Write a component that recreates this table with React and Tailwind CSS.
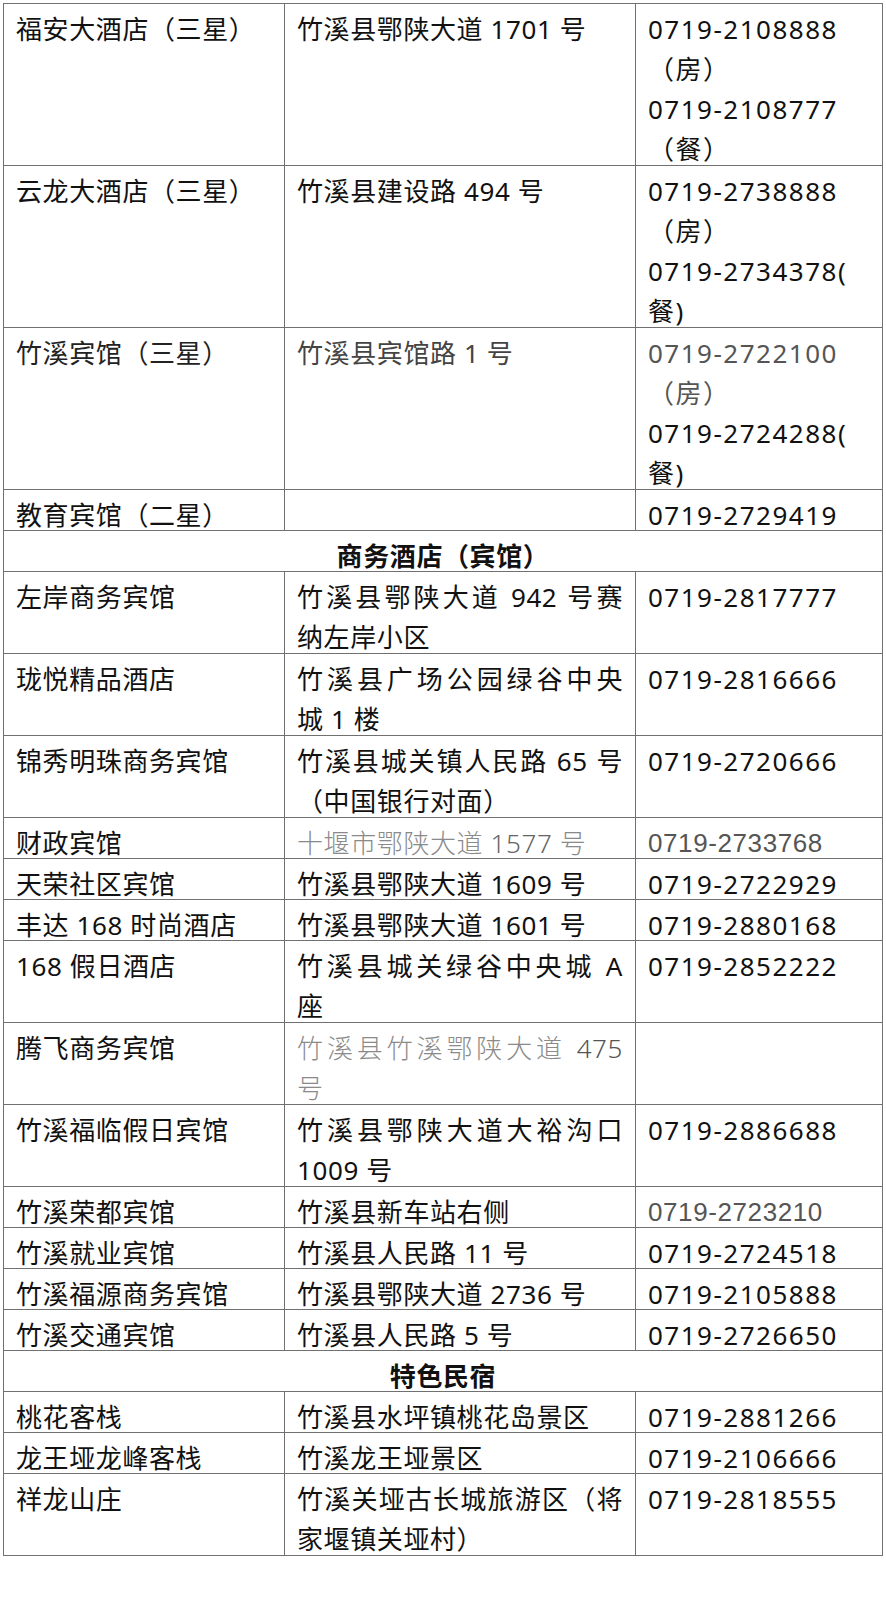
import React from 'react';

const GREY_SANS = "font-['Liberation_Sans','Noto_Sans_CJK_SC',sans-serif] text-[#555]";
const GREY_CJK = 'text-[#8a8a8a] font-light';

// each row: [col1 lines, col2 lines, col3 lines]; a line is a string or { t, j (justify), cls }
const rows = [
  [['福安大酒店（三星）'], ['竹溪县鄂陕大道 1701 号'], ['0719-2108888', '（房）', '0719-2108777', '（餐）']],
  [['云龙大酒店（三星）'], ['竹溪县建设路 494 号'], ['0719-2738888', '（房）', '0719-2734378(', '餐)']],
  [
    [{ t: '竹溪宾馆（三星）', cls: 'text-[#222]' }],
    [{ t: '竹溪县宾馆路 1 号', cls: 'text-[#444]' }],
    [
      { t: '0719-2722100', cls: 'text-[#555]' },
      { t: '（房）', cls: 'text-[#555]' },
      '0719-2724288(',
      '餐)'
    ]
  ],
  [['教育宾馆（二星）'], [], ['0719-2729419']],
  { header: '商务酒店（宾馆）' },
  [['左岸商务宾馆'], [{ t: '竹溪县鄂陕大道 942 号赛', j: true }, '纳左岸小区'], ['0719-2817777']],
  [['珑悦精品酒店'], [{ t: '竹溪县广场公园绿谷中央', j: true }, '城 1 楼'], ['0719-2816666']],
  [['锦秀明珠商务宾馆'], [{ t: '竹溪县城关镇人民路 65 号', j: true }, '（中国银行对面）'], ['0719-2720666']],
  [
    ['财政宾馆'],
    [{ t: <>十堰市鄂陕大道 <span className="text-[#666]">1577</span> 号</>, cls: GREY_CJK }],
    [{ t: '0719-2733768', cls: GREY_SANS }]
  ],
  [['天荣社区宾馆'], ['竹溪县鄂陕大道 1609 号'], ['0719-2722929']],
  [['丰达 168 时尚酒店'], ['竹溪县鄂陕大道 1601 号'], ['0719-2880168']],
  [['168 假日酒店'], [{ t: '竹溪县城关绿谷中央城 A', j: true }, '座'], ['0719-2852222']],
  [
    ['腾飞商务宾馆'],
    [
      { t: <>竹溪县竹溪鄂陕大道 <span className="text-[#555]">475</span></>, j: true, cls: GREY_CJK },
      { t: '号', cls: GREY_CJK }
    ],
    []
  ],
  [['竹溪福临假日宾馆'], [{ t: '竹溪县鄂陕大道大裕沟口', j: true }, '1009 号'], ['0719-2886688']],
  [['竹溪荣都宾馆'], ['竹溪县新车站右侧'], [{ t: '0719-2723210', cls: GREY_SANS }]],
  [['竹溪就业宾馆'], ['竹溪县人民路 11 号'], ['0719-2724518']],
  [['竹溪福源商务宾馆'], ['竹溪县鄂陕大道 2736 号'], ['0719-2105888']],
  [['竹溪交通宾馆'], ['竹溪县人民路 5 号'], ['0719-2726650']],
  { header: '特色民宿' },
  [['桃花客栈'], ['竹溪县水坪镇桃花岛景区'], ['0719-2881266']],
  [['龙王垭龙峰客栈'], ['竹溪龙王垭景区'], ['0719-2106666']],
  [['祥龙山庄'], [{ t: '竹溪关垭古长城旅游区（将', j: true }, '家堰镇关垭村）'], ['0719-2818555']]
];

function Line({ line, phone }) {
  if (typeof line === 'string') {
    return <div className={`whitespace-nowrap ${phone ? 'tracking-[1.5px]' : ''}`}>{line}</div>;
  }
  const justify = line.j ? 'text-justify [text-align-last:justify]' : 'whitespace-nowrap';
  const track = phone && !line.cls?.includes('Liberation') ? 'tracking-[1.5px]' : '';
  return <div className={`${justify} ${track} ${line.cls || ''}`}>{line.t}</div>;
}

function Cell({ lines, phone, multi }) {
  return (
    <td className="border border-[#707070] px-3 pt-[5px] pb-0 align-top">
      <div className={multi ? '-mb-[4px]' : '-mb-[5px]'}>
        {lines.map((l, i) => (
          <Line key={i} line={l} phone={phone} />
        ))}
      </div>
    </td>
  );
}

export default function App() {
  return (
    <div className="w-full bg-white px-[3px] pt-[3px]">
      <table
        lang="zh-CN"
        className="w-full table-fixed border-collapse text-[26px] leading-[40px] tracking-[0.6px] text-[#111] font-['Noto_Sans','Noto_Sans_CJK_SC',sans-serif]"
      >
        <colgroup>
          <col className="w-[281px]" />
          <col className="w-[351px]" />
          <col />
        </colgroup>
        <tbody>
          {rows.map((row, i) => {
            if (row.header) {
              return (
                <tr key={i}>
                  <td colSpan={3} className="border border-[#707070] px-3 pt-[5px] pb-0 text-center font-bold">
                    <div className="-mb-[5px]">{row.header}</div>
                  </td>
                </tr>
              );
            }
            const multi = Math.max(...row.map((c) => c.length)) > 1;
            return (
              <tr key={i}>
                {row.map((lines, j) => (
                  <Cell key={j} lines={lines} phone={j === 2} multi={multi} />
                ))}
              </tr>
            );
          })}
        </tbody>
      </table>
    </div>
  );
}
